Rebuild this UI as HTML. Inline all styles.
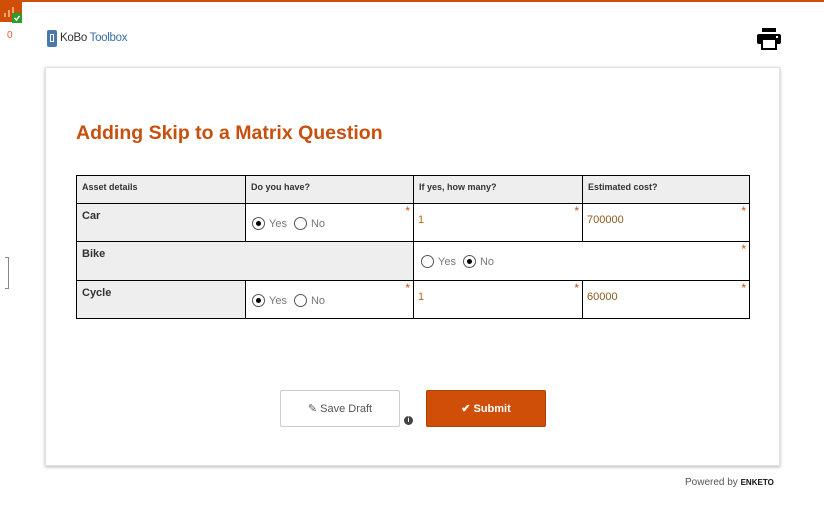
<!DOCTYPE html>
<html><head><meta charset="utf-8"><style>
*{margin:0;padding:0;box-sizing:border-box}
body{width:824px;height:508px;background:#fff;font-family:"Liberation Sans",sans-serif;position:relative;overflow:hidden;color:#333}
.a{position:absolute}
.cell{position:absolute;border:1px solid #000;}
.hd{background:#eee;font-size:9px;font-weight:bold;padding:6px 0 0 5px;color:#333}
.lbl{background:#eee;font-size:11px;font-weight:bold;padding:6px 0 0 5px;color:#333}
.ast{position:absolute;right:3px;top:0px;color:#c8500f;font-size:12px}
.r{display:inline-block;width:13px;height:13px;border:1px solid #555;border-radius:50%;vertical-align:middle;position:relative;margin-right:4px}
.r.on::after{content:"";position:absolute;left:3px;top:3px;width:5px;height:5px;border-radius:50%;background:#000}
.rt{font-size:11px;color:#777;vertical-align:middle;margin-right:7px}
.v{font-size:11px;color:#8a5a20;padding:10px 0 0 4px}
</style></head><body>
<div class="a" style="left:0;top:0;width:824px;height:2px;background:#cf4f08"></div>
<div class="a" style="left:0;top:0;width:22px;height:22px;background:#cf4f08"></div>
<svg class="a" style="left:3px;top:4px" width="16" height="14"><rect x="1" y="9" width="2" height="4" fill="#f2a070"/><rect x="5" y="6" width="2" height="7" fill="#f2a070"/><rect x="9" y="3" width="2" height="10" fill="#f2a070"/></svg>
<div class="a" style="left:12px;top:13px;width:10px;height:10px;background:#2a9d2a"></div>
<svg class="a" style="left:13px;top:14px" width="8" height="8"><path d="M1.5 4l2 2 3-4" stroke="#fff" stroke-width="1.5" fill="none"/></svg>
<div class="a" style="left:7px;top:30px;font-size:10px;color:#e06040">0</div>
<div class="a" style="left:5px;top:257px;width:4px;height:32px;border:1px solid #888;border-left:none"></div>
<div class="a" style="left:47px;top:30px;width:10px;height:17px;background:#4a78a8;border-radius:2px"></div>
<div class="a" style="left:50px;top:34px;width:4px;height:8px;border:1px solid #fff"></div>
<div class="a" style="left:60px;top:32px;font-size:11.5px;letter-spacing:-0.3px;color:#333">KoBo <span style="color:#3a6ea5">Toolbox</span></div>
<svg class="a" style="left:757px;top:28px" width="24" height="22"><rect x="5" y="0" width="14" height="4" fill="#000"/><rect x="0" y="6" width="24" height="10" rx="2" fill="#000"/><rect x="5" y="11" width="14" height="10" fill="#fff" stroke="#000" stroke-width="2"/><rect x="19" y="8" width="2" height="2" fill="#fff"/></svg>
<div class="a" style="left:45px;top:67px;width:735px;height:399px;background:#fff;box-shadow:0 1px 3px rgba(0,0,0,.3);border:1px solid #e3e3e3"></div>
<div class="a" style="left:76px;top:122px;font-size:19.5px;font-weight:bold;color:#c8500f;letter-spacing:0px">Adding Skip to a Matrix Question</div>

<div class="cell hd" style="left:76px;top:175px;width:170px;height:29px">Asset details</div>
<div class="cell hd" style="left:245px;top:175px;width:169px;height:29px">Do you have?</div>
<div class="cell hd" style="left:413px;top:175px;width:170px;height:29px">If yes, how many?</div>
<div class="cell hd" style="left:582px;top:175px;width:168px;height:29px">Estimated cost?</div>

<div class="cell lbl" style="left:76px;top:203px;width:170px;height:39px">Car</div>
<div class="cell" style="left:245px;top:203px;width:169px;height:39px;padding:11px 0 0 6px"><span class="r on"></span><span class="rt">Yes</span><span class="r"></span><span class="rt">No</span><span class="ast">*</span></div>
<div class="cell v" style="left:413px;top:203px;width:170px;height:39px;color:#b06a20">1<span class="ast">*</span></div>
<div class="cell v" style="left:582px;top:203px;width:168px;height:39px">700000<span class="ast">*</span></div>

<div class="cell lbl" style="left:76px;top:241px;width:338px;height:40px">Bike</div>
<div class="cell" style="left:413px;top:241px;width:337px;height:40px;padding:11px 0 0 7px"><span class="r"></span><span class="rt">Yes</span><span class="r on"></span><span class="rt">No</span><span class="ast">*</span></div>

<div class="cell lbl" style="left:76px;top:280px;width:170px;height:39px">Cycle</div>
<div class="cell" style="left:245px;top:280px;width:169px;height:39px;padding:11px 0 0 6px"><span class="r on"></span><span class="rt">Yes</span><span class="r"></span><span class="rt">No</span><span class="ast">*</span></div>
<div class="cell v" style="left:413px;top:280px;width:170px;height:39px;color:#b06a20">1<span class="ast">*</span></div>
<div class="cell v" style="left:582px;top:280px;width:168px;height:39px">60000<span class="ast">*</span></div>

<div class="a" style="left:280px;top:390px;width:120px;height:37px;border:1px solid #ccc;border-radius:2px;font-size:11px;color:#555;text-align:center;line-height:37px">✎ Save Draft</div>
<div class="a" style="left:404px;top:416px;width:9px;height:9px;border-radius:50%;background:#444;color:#fff;font-size:7px;font-weight:bold;text-align:center;line-height:9px">i</div>
<div class="a" style="left:426px;top:390px;width:120px;height:37px;background:#cf4f08;border:1px solid #b04000;border-radius:2px;font-size:11px;font-weight:bold;color:#fff;text-align:center;line-height:37px">✔ Submit</div>
<div class="a" style="left:685px;top:477px;font-size:10px;color:#555">Powered by <b style="color:#111;font-size:8px">ENKETO</b></div>
</body></html>
